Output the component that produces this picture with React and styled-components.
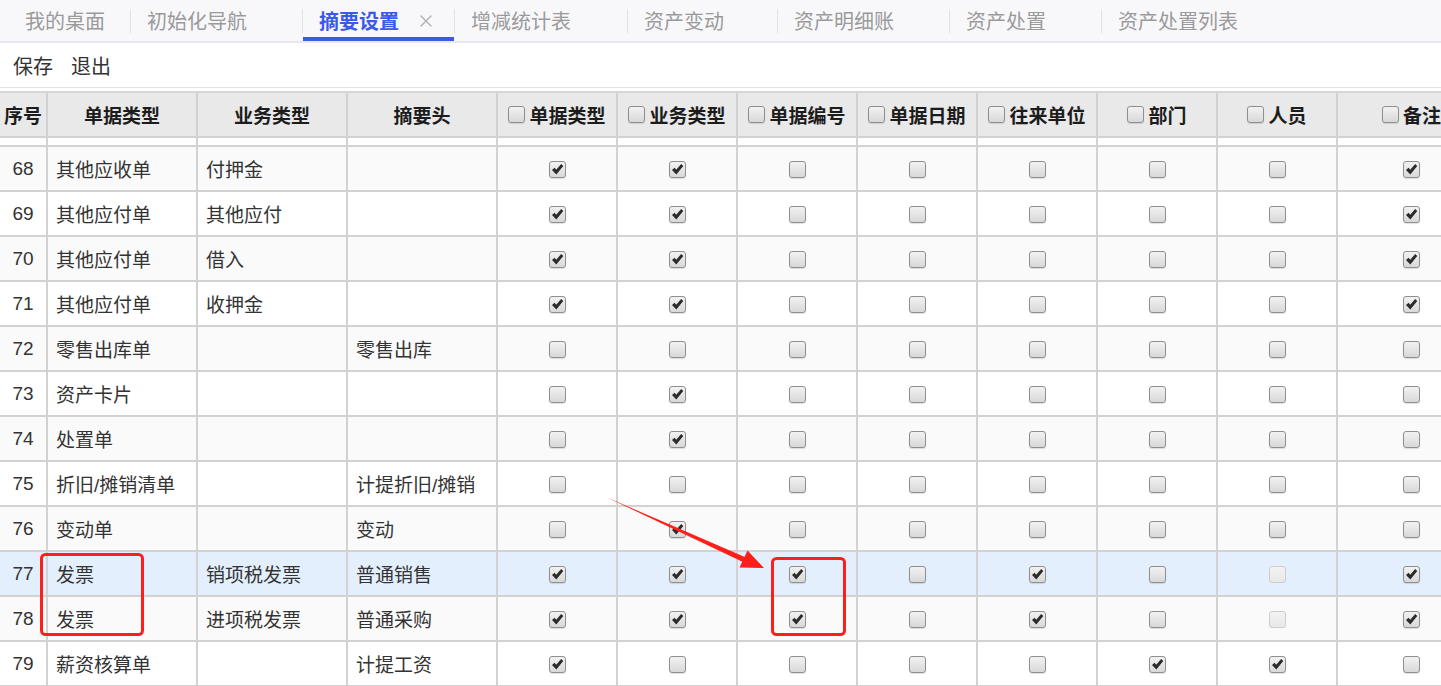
import React from "react";
import styled, { createGlobalStyle } from "styled-components";
import { X } from "lucide-react";

const GlobalStyle = createGlobalStyle`
  html, body {
    margin: 0;
    padding: 0;
    background: #fff;
    font-family: "Liberation Sans", "Noto Sans CJK SC", sans-serif;
  }
`;

const Page = styled.div`
  position: relative;
  width: 1441px;
  height: 686px;
  overflow: hidden;
  background: #fff;
`;

const TabBar = styled.div`
  display: flex;
  align-items: center;
  height: 41px;
  background: #f8f8fa;
  border-bottom: 2px solid #e7e8ee;
`;

const Tab = styled.div`
  display: flex;
  align-items: center;
  align-self: stretch;
  flex: none;
  box-sizing: border-box;
  width: ${(p) => (p.$width ? `${p.$width}px` : "auto")};
  padding: 4px 0 0 ${(p) => (p.$first ? "25px" : "16px")};
  border-bottom: 4px solid ${(p) => (p.$active ? "#3a5ae8" : "transparent")};
  font-size: 20px;
  font-weight: ${(p) => (p.$active ? 700 : 400)};
  color: ${(p) => (p.$active ? "#3a5ae8" : "#9a9a9a")};
  white-space: nowrap;
`;

const TabClose = styled(X)`
  margin-left: 17px;
  color: #b0b0b0;
`;

const TabDivider = styled.span`
  flex: none;
  width: 1px;
  height: 24px;
  background: #e2e2e6;
`;

const Toolbar = styled.div`
  display: flex;
  align-items: center;
  gap: 18px;
  height: 44px;
  padding: 0 13px;
  border-bottom: 1px solid #e4e4e4;
  margin-bottom: 3px;
`;

const ToolButton = styled.span`
  font-size: 20px;
  color: #333;
  cursor: pointer;
`;

const Table = styled.table`
  table-layout: fixed;
  width: 1487px;
  border-collapse: separate;
  border-spacing: 0;
`;

const Th = styled.th`
  box-sizing: border-box;
  height: 47px;
  padding: 0;
  background: #e9e9e9;
  border-top: 2px solid #d6d6d6;
  border-right: 2px solid #d2d2d2;
  border-bottom: 2px solid #d2d2d2;
  font-size: 19px;
  font-weight: 700;
  color: #1c1c1c;
  text-align: center;
  white-space: nowrap;
`;

const HeadInner = styled.span`
  display: inline-flex;
  align-items: center;
  gap: 4px;
`;

const Tr = styled.tr`
  background: ${(p) => (p.$highlight ? "#e3effd" : p.$even ? "#fafafa" : "#fff")};
`;

const Td = styled.td`
  box-sizing: border-box;
  height: ${(p) => (p.$sliver ? "9px" : "45px")};
  padding: 0 ${(p) => (p.$num ? "0" : "8px")};
  border-right: 2px solid #d2d2d2;
  border-bottom: 2px solid #d2d2d2;
  font-size: 19px;
  color: #333;
  text-align: ${(p) => (p.$align || "left")};
  white-space: nowrap;
  overflow: hidden;
`;

const Box = styled.span`
  display: inline-flex;
  align-items: center;
  justify-content: center;
  box-sizing: border-box;
  width: 17px;
  height: 17px;
  border-radius: 3px;
  border: 1px solid ${(p) => (p.$disabled ? "#cdcdcd" : "#8f8f8f")};
  background: ${(p) =>
    p.$disabled
      ? "linear-gradient(#f3f3f3, #e8e8e8)"
      : "linear-gradient(#f2f2f2, #d8d8d8)"};
  box-shadow: ${(p) => (p.$disabled ? "none" : "0 1px 1px rgba(0,0,0,0.12)")};
  vertical-align: middle;
`;

const Annotations = styled.svg`
  position: absolute;
  left: 0;
  top: 0;
  pointer-events: none;
`;

const Check = ({ checked, disabled }) => (
  <Box $disabled={disabled}>
    {checked && (
      <svg width="13" height="13" viewBox="0 0 13 13">
        <path d="M1 7.1 L3.6 4.8 L5.2 6.8 L10.2 1 L12.3 3 L5.3 11.4 Z" fill="#2b2b2b" />
      </svg>
    )}
  </Box>
);

const tabs = [
  { title: "我的桌面", width: 130 },
  { title: "初始化导航", width: 171 },
  { title: "摘要设置", width: 151 },
  { title: "增减统计表", width: 172 },
  { title: "资产变动", width: 149 },
  { title: "资产明细账", width: 171 },
  { title: "资产处置", width: 151 },
  { title: "资产处置列表" },
];

const textCols = [
  { title: "序号", width: 48 },
  { title: "单据类型", width: 150 },
  { title: "业务类型", width: 150 },
  { title: "摘要头", width: 150 },
];

const checkCols = [
  { title: "单据类型", width: 120 },
  { title: "业务类型", width: 120 },
  { title: "单据编号", width: 120 },
  { title: "单据日期", width: 120 },
  { title: "往来单位", width: 120 },
  { title: "部门", width: 120 },
  { title: "人员", width: 120 },
  { title: "备注", width: 149 },
];

// 1 = checked, 0 = unchecked, 2 = disabled
const rows = [
  { no: 68, bill: "其他应收单", biz: "付押金", head: "", checks: [1, 1, 0, 0, 0, 0, 0, 1] },
  { no: 69, bill: "其他应付单", biz: "其他应付", head: "", checks: [1, 1, 0, 0, 0, 0, 0, 1] },
  { no: 70, bill: "其他应付单", biz: "借入", head: "", checks: [1, 1, 0, 0, 0, 0, 0, 1] },
  { no: 71, bill: "其他应付单", biz: "收押金", head: "", checks: [1, 1, 0, 0, 0, 0, 0, 1] },
  { no: 72, bill: "零售出库单", biz: "", head: "零售出库", checks: [0, 0, 0, 0, 0, 0, 0, 0] },
  { no: 73, bill: "资产卡片", biz: "", head: "", checks: [0, 1, 0, 0, 0, 0, 0, 0] },
  { no: 74, bill: "处置单", biz: "", head: "", checks: [0, 1, 0, 0, 0, 0, 0, 0] },
  { no: 75, bill: "折旧/摊销清单", biz: "", head: "计提折旧/摊销", checks: [0, 0, 0, 0, 0, 0, 0, 0] },
  { no: 76, bill: "变动单", biz: "", head: "变动", checks: [0, 1, 0, 0, 0, 0, 0, 0] },
  { no: 77, bill: "发票", biz: "销项税发票", head: "普通销售", checks: [1, 1, 1, 0, 1, 0, 2, 1], highlight: true },
  { no: 78, bill: "发票", biz: "进项税发票", head: "普通采购", checks: [1, 1, 1, 0, 1, 0, 2, 1] },
  { no: 79, bill: "薪资核算单", biz: "", head: "计提工资", checks: [1, 0, 0, 0, 0, 1, 1, 0] },
];

export default function App() {
  return (
    <Page>
      <GlobalStyle />
      <TabBar>
        {tabs.map((t, i) => (
          <React.Fragment key={t.title}>
            {i > 0 && <TabDivider />}
            <Tab $first={i === 0} $active={i === 2} $width={t.width}>
              {t.title}
              {i === 2 && <TabClose size={20} strokeWidth={1.6} />}
            </Tab>
          </React.Fragment>
        ))}
      </TabBar>

      <Toolbar>
        <ToolButton>保存</ToolButton>
        <ToolButton>退出</ToolButton>
      </Toolbar>

      <Table>
        <thead>
          <tr>
            {textCols.map((c) => (
              <Th key={c.title} style={{ width: c.width }}>{c.title}</Th>
            ))}
            {checkCols.map((c) => (
              <Th key={c.title + "c"} style={{ width: c.width }}>
                <HeadInner>
                  <Check />
                  {c.title}
                </HeadInner>
              </Th>
            ))}
          </tr>
        </thead>
        <tbody>
          <Tr>
            {Array.from({ length: 12 }).map((_, i) => (
              <Td key={i} $sliver />
            ))}
          </Tr>
          {rows.map((r) => (
            <Tr key={r.no} $even={r.no % 2 === 0} $highlight={r.highlight}>
              <Td $num $align="center">{r.no}</Td>
              <Td>{r.bill}</Td>
              <Td>{r.biz}</Td>
              <Td>{r.head}</Td>
              {r.checks.map((v, i) => (
                <Td key={i} $align="center">
                  <Check checked={v === 1} disabled={v === 2} />
                </Td>
              ))}
            </Tr>
          ))}
        </tbody>
      </Table>

      <Annotations width="1441" height="686" viewBox="0 0 1441 686">
        <rect x="41.5" y="554.5" width="101" height="80" rx="4" fill="none" stroke="#ff1f1a" strokeWidth="3" />
        <rect x="772.5" y="558.5" width="72" height="76" rx="4" fill="none" stroke="#ff1f1a" strokeWidth="3" />
        <polygon points="606,497 746,557.5 744,562.5" fill="#ff1f1a" />
        <polygon points="764,568 739.5,567.5 747.5,550.5" fill="#ff1f1a" />
      </Annotations>
    </Page>
  );
}
